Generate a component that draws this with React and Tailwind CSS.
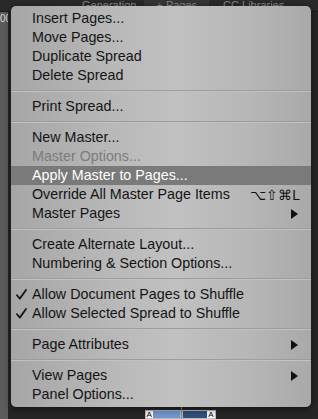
import React from 'react';

const items = [
  { label: 'Insert Pages...' },
  { label: 'Move Pages...' },
  { label: 'Duplicate Spread' },
  { label: 'Delete Spread' },
  { sep: true },
  { label: 'Print Spread...' },
  { sep: true },
  { label: 'New Master...' },
  { label: 'Master Options...', disabled: true },
  { label: 'Apply Master to Pages...', active: true },
  { label: 'Override All Master Page Items', shortcut: '⌥⇧⌘L' },
  { label: 'Master Pages', sub: true },
  { sep: true },
  { label: 'Create Alternate Layout...' },
  { label: 'Numbering & Section Options...' },
  { sep: true },
  { label: 'Allow Document Pages to Shuffle', checked: true },
  { label: 'Allow Selected Spread to Shuffle', checked: true },
  { sep: true },
  { label: 'Page Attributes', sub: true },
  { sep: true },
  { label: 'View Pages', sub: true },
  { label: 'Panel Options...' },
];

const Arrow = () => (
  <svg width="7" height="10" viewBox="0 0 7 10" className="fill-[#111]">
    <path d="M0 0 L7 5 L0 10 Z" />
  </svg>
);

const Check = () => (
  <svg width="11" height="11" viewBox="0 0 11 11" className="stroke-[#161616]" fill="none">
    <path d="M1 6.2 L3.8 9.6 L10 1" strokeWidth="1.8" strokeLinecap="round" strokeLinejoin="round" />
  </svg>
);

const MenuRow = ({ item }) => {
  if (item.sep) {
    return (
      <div className="h-[12px] flex flex-col justify-center">
        <div className="h-[2px] bg-[#9c9c9c] border-b border-[#c2c2c2]" />
      </div>
    );
  }
  const color = item.active ? 'text-white' : item.disabled ? 'text-[#7c7c7c]' : 'text-[#141414]';
  return (
    <div className={`h-[19px] flex items-center ${item.active ? 'bg-[#7a7a7a]' : ''} ${color}`}>
      <span className="w-[21px] pl-[5px] flex items-center">{item.checked && <Check />}</span>
      <span className="flex-1 text-[14.3px] leading-none whitespace-nowrap">{item.label}</span>
      {item.shortcut && (
        <span className="pr-[11px] text-[14px] leading-none">{item.shortcut}</span>
      )}
      {item.sub && (
        <span className="pr-[13px] flex items-center">
          <Arrow />
        </span>
      )}
    </div>
  );
};

export default function App() {
  return (
    <div className="w-[318px] h-[419px] bg-[#262626] relative overflow-hidden font-['Liberation_Sans',Arial,sans-serif]">
      {/* app background behind the menu */}
      <div className="h-[12px] flex items-end text-[11px] text-[#8a8a8a] bg-[#2a2a2a] border-b border-[#1e1e1e] overflow-hidden">
        <span className="pl-[82px] leading-none">Generation</span>
        <span className="ml-[8px] px-[12px] bg-[#363636] leading-none">+ Pages</span>
        <span className="ml-[14px] leading-none">CC Libraries</span>
      </div>
      <div className="flex h-[407px]">
        <div className="w-[8px] bg-[#5c5c5c] text-[10px] text-[#ddd] leading-none pt-[2px] overflow-hidden">00</div>
        <div className="flex-1 flex flex-col justify-end items-center">
          <div className="flex items-end h-[24px] ml-[34px]">
            <div className="w-[36px] h-[9px] bg-white border border-[#bbb] flex">
              <span className="text-[8px] leading-none text-black px-[1px]">A</span>
              <div className="flex-1 bg-[#7199d3]" />
            </div>
            <div className="w-[1px] h-[24px] bg-[#8a8a8a]" />
            <div className="w-[34px] h-[9px] bg-white border border-[#bbb] flex">
              <div className="flex-1 bg-[#2f507f]" />
              <span className="text-[8px] leading-none text-black px-[1px]">A</span>
            </div>
          </div>
        </div>
      </div>

      {/* popup menu */}
      <div className="absolute left-[11px] top-[6px] w-[300px] rounded-[5px] py-[3px] shadow-[0_2px_8px_rgba(0,0,0,0.5)] bg-[linear-gradient(90deg,#a6a6a6_0%,#b9b9b9_35%,#c1c1c1_55%,#b6b6b6_80%,#a9a9a9_100%)]">
        {items.map((item, i) => (
          <MenuRow key={i} item={item} />
        ))}
      </div>
    </div>
  );
}
